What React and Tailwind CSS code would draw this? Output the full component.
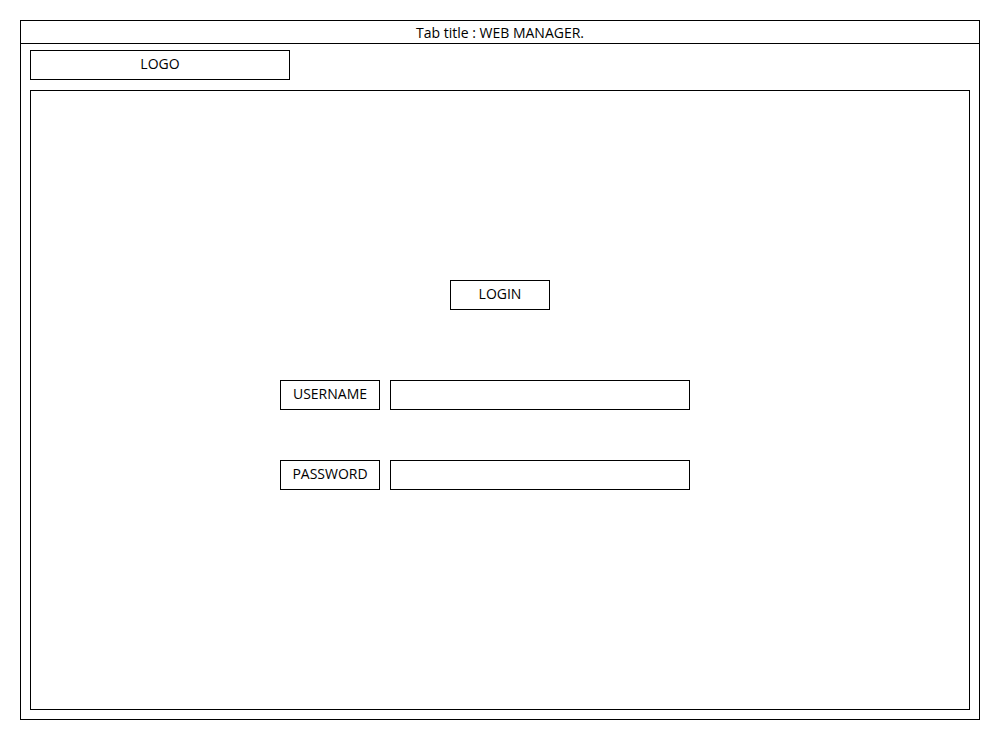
import React from "react";

function LabelBox({ children }) {
  return (
    <div className="w-[100px] h-[30px] border border-black flex items-center justify-center pb-[3px] text-[14px] leading-none">
      {children}
    </div>
  );
}

function App() {
  return (
    <div
      className="w-[1000px] h-[740px] bg-white p-5 text-black"
      style={{ fontFamily: '"Open Sans", "DejaVu Sans", sans-serif' }}
    >
      <div className="w-[960px] h-[700px] border border-black flex flex-col">
        {/* tab title */}
        <div className="h-[23px] border-b border-black flex items-center justify-center pt-[2px] text-[14px] leading-none">
          Tab title : WEB MANAGER.
        </div>

        {/* logo */}
        <div className="mt-[6px] ml-[9px] w-[260px] h-[30px] border border-black flex items-center justify-center pb-[3px] text-[14px] leading-none">
          LOGO
        </div>

        {/* main panel */}
        <div className="mt-[10px] ml-[9px] w-[940px] h-[620px] border border-black flex flex-col">
          <div className="pt-[189px] flex justify-center">
            <LabelBox>LOGIN</LabelBox>
          </div>

          <div className="mt-[70px] pl-[249px] flex flex-col gap-[50px]">
            <div className="flex gap-[10px]">
              <LabelBox>USERNAME</LabelBox>
              <input
                type="text"
                className="w-[300px] h-[30px] border border-black outline-none px-2 text-[14px]"
              />
            </div>
            <div className="flex gap-[10px]">
              <LabelBox>PASSWORD</LabelBox>
              <input
                type="password"
                className="w-[300px] h-[30px] border border-black outline-none px-2 text-[14px]"
              />
            </div>
          </div>
        </div>
      </div>
    </div>
  );
}

export default App;
